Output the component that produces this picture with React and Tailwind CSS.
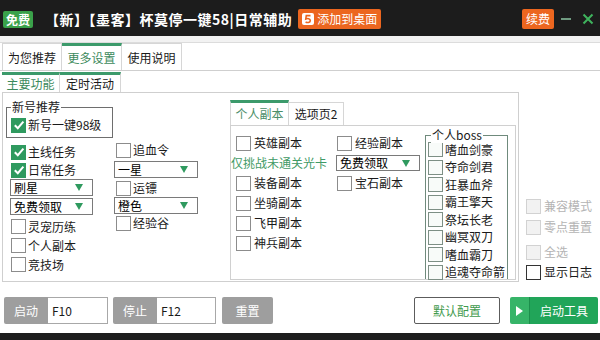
import React from "react";

// 复选框
function Box({ checked, disabled, boss, dark }) {
  let cls = "bg-white border-[#8c8c8c]";
  if (checked) cls = "bg-[#2f9a5f] border-[#2f9a5f]";
  else if (disabled) cls = "bg-[#f2f2f2] border-[#d2d2d2]";
  else if (boss) cls = "bg-[#f8fbf9] border-[#7d8f85]";
  else if (dark) cls = "bg-white border-[#333333]";
  return (
    <span className={`w-[15px] h-[15px] border shrink-0 flex items-center justify-center ${cls}`}>
      {checked && (
        <svg width="12" height="12" viewBox="0 0 12 12">
          <path d="M1.8 6.2 L4.8 9.2 L10.4 2.6" stroke="white" strokeWidth="2" fill="none" />
        </svg>
      )}
    </span>
  );
}

function Check({ label, checked, disabled, boss, dark, h = "h-[18px]", gap = "gap-[2px]" }) {
  return (
    <div className={`flex items-center ${gap} ${h}`}>
      <Box checked={checked} disabled={disabled} boss={boss} dark={dark} />
      <span className={`whitespace-nowrap ${disabled ? "text-[#b4b4b4]" : "text-[#1a1a1a]"}`}>{label}</span>
    </div>
  );
}

function Select({ label, w = "w-[83px]", h = "h-[17px]" }) {
  return (
    <div className={`${w} ${h} border border-[#7a7a7a] bg-white flex items-center justify-between pl-[3px] pr-[9px]`}>
      <span className="whitespace-nowrap leading-none">{label}</span>
      <span className="w-0 h-0 border-l-[4px] border-r-[4px] border-t-[7px] border-l-transparent border-r-transparent border-t-[#2f9a5f]" />
    </div>
  );
}

export default function App() {
  return (
    <div className="w-[600px] h-[340px] bg-white overflow-hidden flex flex-col text-[12px] font-['Noto_Sans_CJK_SC',sans-serif]">
      {/* --- 标题栏 --- */}
      <div className="h-[36px] bg-[#1c1c1c] flex items-center pt-[2px] pl-[3px] pr-[6px] shrink-0">
        <span className="h-[17px] px-[3px] bg-[#3aa14a] text-white font-bold text-[12px] leading-[17px] rounded-[2px]">免费</span>
        <span className="ml-[12px] text-white font-bold text-[14px] whitespace-nowrap tracking-[0.5px]">【新】【墨客】杯莫停一键58|日常辅助</span>
        <span className="ml-[6px] h-[20px] px-[4px] bg-[#ec661f] text-white text-[12px] flex items-center gap-[3px] rounded-[2px]">
          <svg width="12" height="12" viewBox="0 0 12 12">
            <rect x="0" y="0" width="12" height="12" rx="2" fill="white" />
            <path d="M8.5 2.6 H4.3 L3.8 6 C5.5 5.2 8.4 5.4 8.3 7.6 C8.2 9.8 5.2 10 3.6 8.8" stroke="#ec661f" strokeWidth="1.6" fill="none" />
          </svg>
          添加到桌面
        </span>
        <span className="ml-auto h-[20px] px-[4px] bg-[#ec661f] text-white text-[12px] flex items-center rounded-[2px]">续费</span>
        <svg className="ml-[6px]" width="12" height="12" viewBox="0 0 12 12">
          <path d="M1 6 H11" stroke="#6f9a80" strokeWidth="2" />
        </svg>
        <svg className="ml-[10px]" width="12" height="12" viewBox="0 0 12 12">
          <path d="M1.5 1.5 L10.5 10.5 M10.5 1.5 L1.5 10.5" stroke="#3fb35d" strokeWidth="2" />
        </svg>
      </div>
      <div className="h-[7px] bg-[#f2f2f2] border-b border-[#dcdcdc] shrink-0" />

      {/* --- 一级选项卡 --- */}
      <div className="h-[27px] flex pl-[2px] shrink-0">
        <div className="w-[60px] border-l border-r border-t border-[#d6d6d6] flex items-center justify-center pt-[2px] text-[#1a1a1a]">为您推荐</div>
        <div className="w-[60px] border-t-[3px] border-t-[#3c9a6b] border-r border-r-[#d6d6d6] flex items-center justify-center text-[#3c8a5c]">更多设置</div>
        <div className="w-[60px] border-r border-t border-[#d6d6d6] flex items-center justify-center pt-[2px] text-[#1a1a1a]">使用说明</div>
      </div>

      {/* --- 更多设置页 --- */}
      <div className="border-t border-[#cfcfcf] flex shrink-0">
        <div className="ml-[2px] mt-[1px] w-[517px] flex flex-col">
          {/* 二级选项卡 */}
          <div className="h-[20px] flex">
            <div className="w-[58px] border-t-[3px] border-t-[#3c9a6b] border-r border-r-[#d6d6d6] flex items-center justify-center text-[#3c8a5c]">主要功能</div>
            <div className="w-[61px] border-t-[3px] border-t-[#3c9a6b] border-r border-r-[#d6d6d6] flex items-center justify-center text-[#1a1a1a]">定时活动</div>
          </div>
          <div className="h-[190px] border border-[#cfcfcf] flex">
            {/* 左侧 */}
            <div className="ml-[3px] w-[224px] flex flex-col">
              <div className="relative mt-[14px] w-[107px] h-[31px] border border-[#6e6e6e] pt-[8px] pl-[4px]">
                <span className="absolute left-[4px] top-[-9px] bg-white px-[1px] leading-[16px] text-[#1a1a1a]">新号推荐</span>
                <Check label="新号一键98级" checked />
              </div>
              <div className="flex">
                <div className="w-[108px] flex flex-col mt-[5px]">
                  <div className="pl-[5px]">
                    <Check label="主线任务" checked />
                    <Check label="日常任务" checked />
                  </div>
                  <div className="ml-[4px]">
                    <Select label="刷星" />
                    <div className="mt-[2px]">
                      <Select label="免费领取" />
                    </div>
                  </div>
                  <div className="pl-[5px] mt-[2px]">
                    <Check label="灵宠历练" h="h-[19px]" />
                    <Check label="个人副本" h="h-[19px]" />
                    <Check label="竞技场" h="h-[19px]" />
                  </div>
                </div>
                <div className="flex flex-col mt-[3px]">
                  <div className="pl-[2px]">
                    <Check label="追血令" />
                  </div>
                  <div className="mt-[2px]">
                    <Select label="一星" w="w-[84px]" />
                  </div>
                  <div className="pl-[2px] mt-[1px]">
                    <Check label="运镖" />
                  </div>
                  <div>
                    <Select label="橙色" w="w-[84px]" />
                  </div>
                  <div className="pl-[2px]">
                    <Check label="经验谷" />
                  </div>
                </div>
              </div>
            </div>

            {/* 中间选项卡 */}
            <div className="w-[286px] mt-[7px] flex flex-col">
              <div className="h-[25px] flex">
                <div className="w-[59px] border-t-[3px] border-t-[#3c9a6b] border-l border-l-[#d6d6d6] border-r border-r-[#d6d6d6] flex items-center justify-center text-[#4a8e68]">个人副本</div>
                <div className="w-[55px] mt-[2px] border-t border-r border-[#d6d6d6] flex items-center justify-center text-[#1a1a1a]">选项页2</div>
              </div>
              <div className="h-[155px] border border-[#d0d0d0] flex">
                <div className="w-[194px] flex flex-col pt-[7px]">
                  <div className="h-[20px] flex items-center">
                    <div className="w-[106px] pl-[5px]"><Check label="英雄副本" gap="gap-[3px]" /></div>
                    <Check label="经验副本" gap="gap-[3px]" />
                  </div>
                  <div className="h-[20px] flex items-center">
                    <div className="w-[105px] text-[#3f9a66] whitespace-nowrap">仅挑战未通关光卡</div>
                    <Select label="免费领取" w="w-[84px]" h="h-[16px]" />
                  </div>
                  <div className="h-[20px] flex items-center">
                    <div className="w-[106px] pl-[5px]"><Check label="装备副本" gap="gap-[3px]" /></div>
                    <Check label="宝石副本" gap="gap-[3px]" />
                  </div>
                  <div className="h-[20px] flex items-center pl-[5px]"><Check label="坐骑副本" gap="gap-[3px]" /></div>
                  <div className="h-[20px] flex items-center pl-[5px]"><Check label="飞甲副本" gap="gap-[3px]" /></div>
                  <div className="h-[20px] flex items-center pl-[5px]"><Check label="神兵副本" gap="gap-[3px]" /></div>
                </div>
                {/* 个人boss */}
                <div className="relative mt-[9px] w-[83px] border border-b-0 border-[#6f8a7c] pt-[5px] pl-[2px]">
                  <span className="absolute left-[5px] top-[-9px] bg-white px-[1px] leading-[16px] text-[#1a1a1a]">个人boss</span>
                  <Check label="嗜血剑豪" boss h="h-[17.5px]" />
                  <Check label="夺命剑君" boss h="h-[17.5px]" />
                  <Check label="狂暴血斧" boss h="h-[17.5px]" />
                  <Check label="霸王擎天" boss h="h-[17.5px]" />
                  <Check label="祭坛长老" boss h="h-[17.5px]" />
                  <Check label="幽冥双刀" boss h="h-[17.5px]" />
                  <Check label="嗜血霸刀" boss h="h-[17.5px]" />
                  <Check label="追魂夺命箭" boss h="h-[17.5px]" />
                </div>
              </div>
            </div>
          </div>
        </div>

        {/* 右侧选项 */}
        <div className="flex flex-col pl-[7px] pt-[125px]">
          <Check label="兼容模式" disabled h="h-[20px]" gap="gap-[3px]" />
          <div className="mt-[1px]"><Check label="零点重置" disabled h="h-[20px]" gap="gap-[3px]" /></div>
          <div className="mt-[5px]"><Check label="全选" disabled h="h-[20px]" gap="gap-[3px]" /></div>
          <Check label="显示日志" dark h="h-[20px]" gap="gap-[3px]" />
        </div>
      </div>

      {/* --- 底部工具栏 --- */}
      <div className="mt-[15px] h-[27px] flex items-stretch pl-[4px] pr-[2px] shrink-0">
        <div className="w-[44px] bg-[#9e9e9e] text-white flex items-center justify-center rounded-l-[2px]">启动</div>
        <div className="w-[60px] border border-l-0 border-[#a8a8a8] bg-white flex items-center pl-[4px] text-[#1a1a1a]">F10</div>
        <div className="ml-[5px] w-[44px] bg-[#9e9e9e] text-white flex items-center justify-center rounded-l-[2px]">停止</div>
        <div className="w-[59px] border border-l-0 border-[#a8a8a8] bg-white flex items-center pl-[4px] text-[#1a1a1a]">F12</div>
        <div className="ml-[6px] w-[51px] bg-[#9e9e9e] text-white flex items-center justify-center rounded-[2px]">重置</div>

        <div className="ml-auto w-[86px] border border-[#5c5c5c] bg-white text-[#3f9a4c] flex items-center justify-center rounded-[2px]">默认配置</div>
        <div className="ml-[10px] w-[88px] flex rounded-[2px] overflow-hidden">
          <div className="w-[20px] bg-[#36b468] border-r border-[#1c8f4c] flex items-center justify-center">
            <svg width="7" height="10" viewBox="0 0 7 10">
              <path d="M0 0 L7 5 L0 10 Z" fill="white" />
            </svg>
          </div>
          <div className="flex-1 bg-[#21a559] text-white flex items-center justify-center">启动工具</div>
        </div>
      </div>
      <div className="mt-[9px] h-[7px] bg-[#1e1e1e] shrink-0" />
    </div>
  );
}
